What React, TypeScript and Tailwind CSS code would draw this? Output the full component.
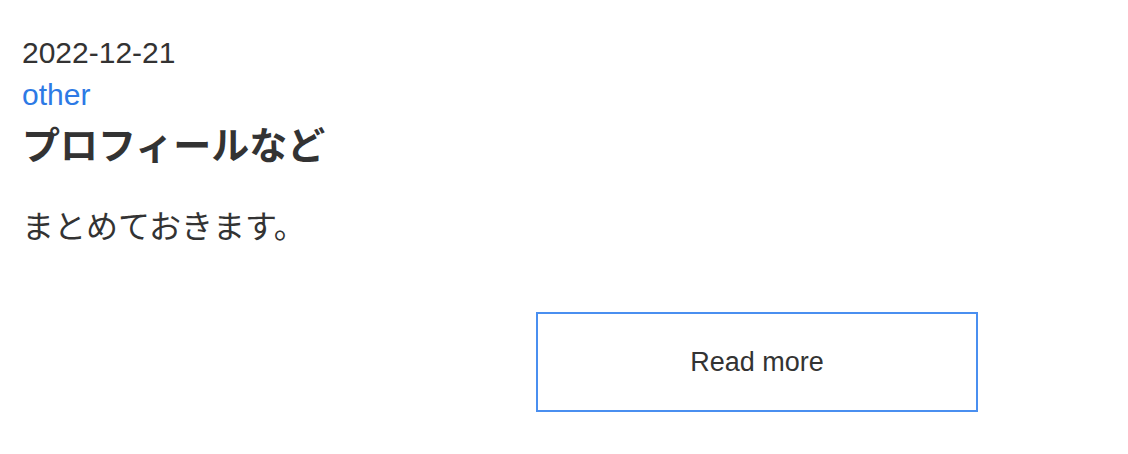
import React from "react";

const App = () => {
  return (
    <div className="min-h-screen bg-white pl-[22px] pt-[32px] text-[#333333]">
      <article className="font-['Liberation_Sans','Noto_Sans_CJK_JP',sans-serif]">
        <p className="text-[30px] leading-[42px]">2022-12-21</p>
        <a href="#" className="block text-[30px] leading-[42px] text-[#2d7ae5]">
          other
        </a>
        <h3 className="text-[38px] font-bold leading-[60px]">プロフィールなど</h3>
        <p className="mt-[27px] text-[32px] leading-[48px]">まとめておきます。</p>

        <div className="mt-[61px] flex">
          <button className="ml-[514px] flex h-[100px] w-[442px] items-center justify-center border-2 border-[#4a8ff0] bg-white text-[27px] text-[#333333]">
            Read more
          </button>
        </div>
      </article>
    </div>
  );
};

export default App;
